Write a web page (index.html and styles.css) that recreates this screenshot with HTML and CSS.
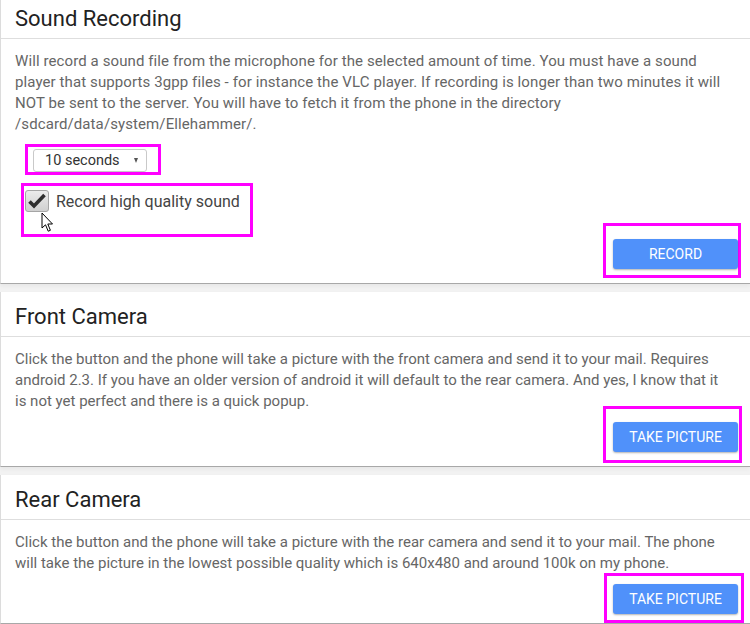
FILE: index.html
```html
<!DOCTYPE html>
<html>
<head>
<meta charset="utf-8">
<link rel="stylesheet" href="styles.css">
</head>
<body>
<div class="page">
  <section class="card">
    <header class="card-head"><h2>Sound Recording</h2></header>
    <div class="card-body">
      <p class="desc desc-wide">Will record a sound file from the microphone for the selected amount of time. You must have a sound player that supports 3gpp files - for instance the VLC player. If recording is longer than two minutes it will NOT be sent to the server. You will have to fetch it from the phone in the directory /sdcard/data/system/Ellehammer/.</p>
      <div class="mark mark-select">
        <div class="select"><span>10 seconds</span><span class="caret"></span></div>
      </div>
      <div class="mark mark-check">
        <span class="checkbox">
          <svg width="24" height="22" viewBox="0 0 24 22">
            <defs>
              <linearGradient id="cbg" x1="0" y1="0" x2="0" y2="1">
                <stop offset="0" stop-color="#ececec"/>
                <stop offset="1" stop-color="#cfcfcf"/>
              </linearGradient>
            </defs>
            <rect x="0.5" y="0.5" width="23" height="21" rx="2.5" fill="url(#cbg)" stroke="#a5a5a5"/>
            <path d="M4.5 11.5 L9 16 L19.5 5" fill="none" stroke="#2e2e2e" stroke-width="3.6" stroke-linejoin="miter"/>
          </svg>
        </span>
        <span class="check-label">Record high quality sound</span>
        <svg class="cursor" width="13" height="21" viewBox="0 0 13 21">
          <path d="M1 1 L1 16 L4.5 12.8 L7.2 19.2 L9.4 18.3 L6.8 12 L11.5 12 Z" fill="#fff" stroke="#000" stroke-width="1" stroke-linejoin="round"/>
        </svg>
      </div>
      <div class="actions actions-1">
        <div class="mark mark-btn-1"><button class="btn">RECORD</button></div>
      </div>
    </div>
  </section>

  <section class="card">
    <header class="card-head"><h2>Front Camera</h2></header>
    <div class="card-body body-2">
      <p class="desc">Click the button and the phone will take a picture with the front camera and send it to your mail. Requires android 2.3. If you have an older version of android it will default to the rear camera. And yes, I know that it is not yet perfect and there is a quick popup.</p>
      <div class="actions actions-2">
        <div class="mark mark-btn-2"><button class="btn">TAKE PICTURE</button></div>
      </div>
    </div>
  </section>

  <section class="card">
    <header class="card-head"><h2>Rear Camera</h2></header>
    <div class="card-body body-3">
      <p class="desc">Click the button and the phone will take a picture with the rear camera and send it to your mail. The phone will take the picture in the lowest possible quality which is 640x480 and around 100k on my phone.</p>
      <div class="actions actions-3">
        <div class="mark mark-btn-3"><button class="btn">TAKE PICTURE</button></div>
      </div>
    </div>
  </section>
</div>
</body>
</html>
```

FILE: styles.css
```css
html {
  background: #f2f2f2;
}
body {
  margin: 0;
  font-family: Roboto, "Liberation Sans", Arial, sans-serif;
  overflow: hidden;
}
.page {
  margin-top: -6px;
}
.card {
  background: #fff;
  border-left: 1px solid #dcdcdc;
  border-bottom: 1px solid #a8a8a8;
  margin-bottom: 8px;
  box-shadow: 0 2px 4px rgba(0, 0, 0, 0.05);
}
.card-head {
  padding: 12px 14px 6px 14px;
  border-bottom: 1px solid #dedede;
}
.card-head h2 {
  margin: 0;
  font-size: 22px;
  line-height: 26px;
  font-weight: 400;
  color: #222;
}
.card-body {
  padding: 12px 0 5px 14px;
}
.body-2 {
  padding-bottom: 3px;
}
.body-3 {
  padding-bottom: 0;
}
.desc {
  margin: 0;
  padding-right: 20px;
  font-size: 15px;
  line-height: 21px;
  color: #666;
}
.desc-wide {
  letter-spacing: 0.1px;
}
.mark {
  border: 3px solid #ff00ff;
  box-sizing: border-box;
}
.mark-select {
  margin: 9px 0 0 10px;
  width: 136px;
  padding: 2px 0 0 5px;
}
.select {
  width: 114px;
  height: 23px;
  box-sizing: border-box;
  border: 1px solid #c9c9c9;
  border-radius: 3px;
  background: #fff;
  display: flex;
  align-items: center;
  justify-content: space-between;
  padding: 0 8px 0 11px;
  font-size: 14.5px;
  color: #333;
}
.caret {
  width: 0;
  height: 0;
  border-left: 2.5px solid transparent;
  border-right: 2.5px solid transparent;
  border-top: 5px solid #555;
}
.mark-check {
  position: relative;
  margin: 8px 0 0 6px;
  width: 232px;
  height: 54px;
  padding: 4px 0 0 1px;
  display: flex;
  align-items: flex-start;
}
.checkbox {
  display: block;
  width: 24px;
  height: 22px;
}
.checkbox svg {
  display: block;
}
.check-label {
  margin-left: 7px;
  font-size: 16px;
  line-height: 24px;
  color: #444;
}
.cursor {
  position: absolute;
  left: 17px;
  top: 26px;
}
.actions {
  display: flex;
  justify-content: flex-end;
}
.actions-1 {
  margin-top: -14px;
}
.actions-2 {
  margin-top: -6px;
}
.actions-3 {
  margin-top: -1px;
}
.mark-btn-1 {
  margin-right: 9px;
  padding: 13px 0 6px 7px;
}
.mark-btn-2 {
  margin-right: 8px;
  padding: 13px 1px 8px 7px;
}
.mark-btn-3 {
  margin-right: 6px;
  padding: 8px 3px 6px 6px;
}
.btn {
  display: block;
  width: 125px;
  height: 30px;
  border: none;
  border-radius: 3px;
  background: #5091fa;
  color: #fff;
  font-family: Roboto, "Liberation Sans", Arial, sans-serif;
  font-size: 14px;
  font-weight: 400;
  padding: 0;
  box-shadow: 0 1px 2px rgba(0, 0, 0, 0.3);
}
```
